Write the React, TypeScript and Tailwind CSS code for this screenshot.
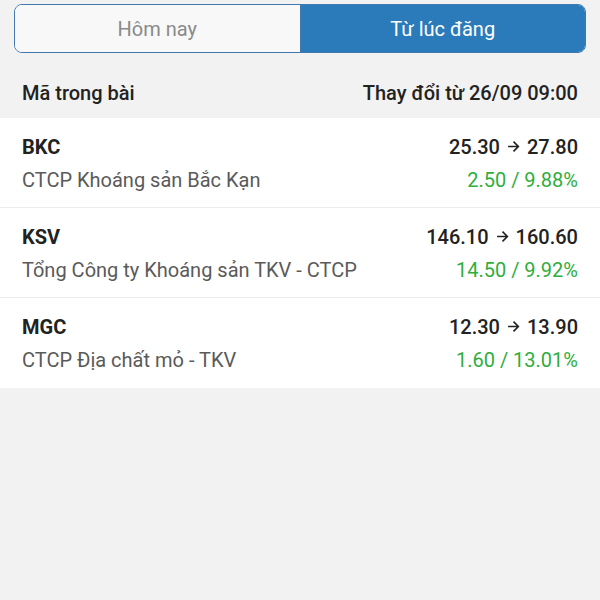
const stocks = [
  { code: "BKC", name: "CTCP Khoáng sản Bắc Kạn", from: "25.30", to: "27.80", change: "2.50 / 9.88%" },
  { code: "KSV", name: "Tổng Công ty Khoáng sản TKV - CTCP", from: "146.10", to: "160.60", change: "14.50 / 9.92%" },
  { code: "MGC", name: "CTCP Địa chất mỏ - TKV", from: "12.30", to: "13.90", change: "1.60 / 13.01%" },
];

function Arrow() {
  return (
    <svg width="13" height="13" viewBox="0 0 12 12" className="mx-[7px] mb-[2px] inline-block" fill="none" stroke="#222" strokeWidth="1.5">
      <path d="M1 6h9.5M6 1.5 10.5 6 6 10.5" />
    </svg>
  );
}

export default function App() {
  return (
    <div
      className="w-[600px] h-[600px] bg-[#f2f2f2] overflow-hidden"
      style={{ fontFamily: "Roboto, 'Noto Sans', sans-serif" }}
    >
      <div className="px-[14px] pt-[4px]">
        <div className="flex h-[49px] rounded-[8px] border-[1.5px] border-[#3f79ad] overflow-hidden">
          <button className="flex-1 bg-[#f8f8f8] text-[#8a8a8a] text-[20px] flex items-center justify-center">
            Hôm nay
          </button>
          <button className="flex-1 bg-[#2b7bba] text-white text-[20px] flex items-center justify-center border-l border-[#3f79ad]">
            Từ lúc đăng
          </button>
        </div>
      </div>

      <div className="flex justify-between items-center px-[22px] pt-[14px] h-[65px] text-[20px] leading-[24px] font-medium text-[#222]">
        <span>Mã trong bài</span>
        <span>Thay đổi từ 26/09 09:00</span>
      </div>

      <div className="bg-white">
        {stocks.map((s, i) => (
          <div
            key={s.code}
            className={`h-[90px] px-[22px] pt-[16px] ${i < stocks.length - 1 ? "border-b border-[#ececec]" : ""}`}
          >
            <div className="flex justify-between items-center h-[26px] text-[20px] text-[#222]">
              <span className="font-bold">{s.code}</span>
              <span className="font-medium flex items-center">
                {s.from}
                <Arrow />
                {s.to}
              </span>
            </div>
            <div className="flex justify-between items-center h-[26px] mt-[7px] text-[20px]">
              <span className="text-[#5a5a5a]">{s.name}</span>
              <span className="text-[#2eae3c]">{s.change}</span>
            </div>
          </div>
        ))}
      </div>
    </div>
  );
}
